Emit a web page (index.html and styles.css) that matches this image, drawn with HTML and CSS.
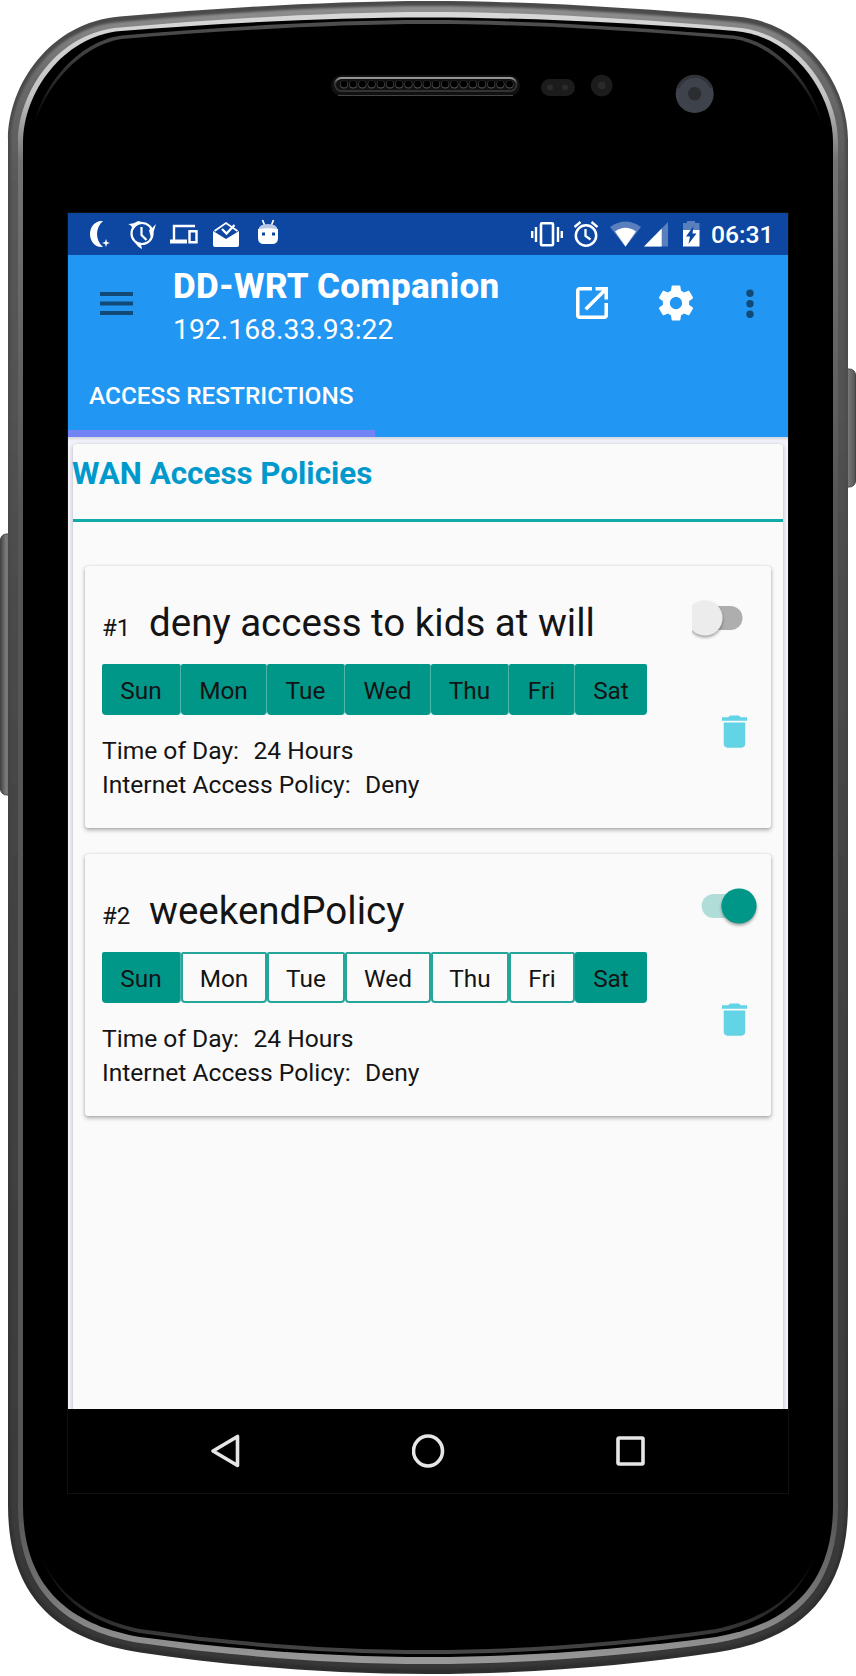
FILE: index.html
```html
<!DOCTYPE html>
<html lang="en">
<head>
<meta charset="utf-8">
<title>DD-WRT Companion</title>
<link rel="stylesheet" href="styles.css">
</head>
<body>
<div class="phone">
<svg class="shell" viewBox="0 0 856 1676" aria-hidden="true">
  <defs>
    <linearGradient id="rim" x1="0" y1="0" x2="0" y2="1"><stop offset="0" stop-color="#4a4a4a"/><stop offset=".25" stop-color="#4c4c4c"/><stop offset="1" stop-color="#2e2e2e"/></linearGradient>
    <linearGradient id="rim2" x1="0" y1="0" x2="0" y2="1"><stop offset="0" stop-color="#909090"/><stop offset=".04" stop-color="#6c6c6c"/><stop offset=".1" stop-color="#5a5a5a"/><stop offset=".5" stop-color="#444"/><stop offset="1" stop-color="#383838"/></linearGradient>
    <linearGradient id="shine" x1="0" y1="0" x2="0" y2="1"><stop offset="0" stop-color="#d8d8d8"/><stop offset=".05" stop-color="#c4c4c4"/><stop offset=".09" stop-color="#747474"/><stop offset=".3" stop-color="#565656"/><stop offset=".91" stop-color="#565656"/><stop offset=".95" stop-color="#707070"/><stop offset="1" stop-color="#999"/></linearGradient>
    <linearGradient id="sheen" x1="0" y1="0" x2="0" y2="1"><stop offset="0" stop-color="#505050"/><stop offset=".025" stop-color="#3c3c3c"/><stop offset=".065" stop-color="#000"/><stop offset=".94" stop-color="#000"/><stop offset=".975" stop-color="#2a2a2a"/><stop offset="1" stop-color="#484848"/></linearGradient>
    <linearGradient id="key" x1="0" y1="0" x2="1" y2="0"><stop offset="0" stop-color="#444"/><stop offset=".4" stop-color="#7c7c7c"/><stop offset="1" stop-color="#555"/></linearGradient>
    <linearGradient id="grille" x1="0" y1="0" x2="0" y2="1"><stop offset="0" stop-color="#999"/><stop offset=".4" stop-color="#333"/><stop offset="1" stop-color="#333"/></linearGradient>
    <filter id="soft" x="-5%" y="-5%" width="110%" height="110%"><feGaussianBlur stdDeviation="1.3"/></filter>
  </defs>
  <rect x=".5" y="534" width="14" height="261" rx="6" fill="url(#key)" stroke="#444"/>
  <rect x="841.500" y="369" width="14" height="118" rx="6" fill="url(#key)" stroke="#444"/>
  <path fill="url(#rim)" d="M8 140C8 85 50 22 120 16.5C220 8 330 1 428 1S636 8 736 16.5C806 22 848 85 848 140V1505C848 1600 796 1640 716 1652.5C626 1666 526 1674 428 1674S230 1666 140 1652.5C60 1640 8 1600 8 1505Z"/>
  <path filter="url(#soft)" fill="url(#rim2)" d="M11 140C11 88 53 27 120 22C220 13 330 6 428 6S636 13 736 22C803 27 845 88 845 140V1505C845 1598 792 1636 716 1648C626 1661 526 1669 428 1669S230 1661 140 1648C64 1636 11 1598 11 1505Z"/>
  <path fill="url(#shine)" d="M18 142C18 92 58 32 120 27.5C220 19 330 12 428 12S636 19 736 27.5C798 32 838 92 838 142V1505C838 1594 788 1631 716 1643C626 1656 526 1664 428 1664S230 1656 140 1643C68 1631 18 1594 18 1505Z"/>
  <path d="M23 142C23 94 62 36 121 31C221 23 330 17.500 428 17.500S635 23 735 31C794 36 833 94 833 142V1505C833 1589 785 1625 716 1637C626 1649 526 1657 428 1657S230 1649 140 1637C71 1625 23 1589 23 1505Z"/>
  <path fill="url(#sheen)" d="M31 142C33 98 72 42 122 35.500C222 27 330 20 428 20S634 27 734 35.500C784 42 823 98 825 142V1505C821 1586 775 1621 716 1633C626 1646 526 1654 428 1654S230 1646 140 1633C81 1621 35 1586 31 1505Z"/>
  <path d="M31 142C35 100 74 46 122 39C222 31 330 24 428 24S634 31 734 39C782 46 821 100 825 142V1505C821 1583 775 1617 716 1629C626 1642 526 1650 428 1650S230 1642 140 1629C81 1617 35 1583 31 1505Z"/>
  <rect x="331" y="75" width="189" height="21" rx="10.500" fill="#111"/>
  <path d="M338 95.500H513" stroke="#444"/>
  <rect x="335" y="78" width="181.500" height="13" rx="6.500" fill="#111" stroke="url(#grille)" stroke-width="2"/>
  <path d="M344 84.500H510" stroke="#565656" stroke-width="8" stroke-linecap="round" stroke-dasharray="0 9.200"/>
  <path d="M344 84H510" stroke="#000" stroke-width="7" stroke-linecap="round" stroke-dasharray="0 9.200"/>
  <rect x="541" y="79" width="34" height="17" rx="8.500" fill="#1c1c1c"/>
  <g fill="#2b2b2b"><circle cx="550" cy="87.500" r="3"/><circle cx="565" cy="87.500" r="3"/></g>
  <circle cx="601.700" cy="85.500" r="10.800" fill="#1c1c1c"/><circle cx="601.700" cy="85.500" r="3.800" fill="#2b2b2b"/>
  <circle cx="694.700" cy="94" r="19" fill="#3e434b"/><path d="M678 88A17.800 17.800 0 0 1 711.500 88" fill="none" stroke="#30343a" stroke-width="3"/><circle cx="694.700" cy="93.700" r="6.700" fill="#2b2d31"/>
</svg>

<main class="screen">
  <div class="status">
    <svg class="si moon" viewBox="0 0 32 42"><path fill="#fff" d="M17 8C9 7 4 14 4 21S9 35 17 34C9 27 9 15 17 8ZM20 26l1 3 3 1-3 1-1 3-1-3-3-1 3-1Z"/></svg>
    <svg class="si timely" viewBox="0 0 32 42"><circle cx="16" cy="20.500" r="10.500" fill="none" stroke="#fff" stroke-width="2.200"/><path fill="#fff" d="M2 11Q8 11 12 8L16 9Q9 13 7 17 6 12 2 11ZM30 11Q27 21 25 25L23 17Q27 15 30 11ZM7 26Q11 34 16 36L15 31Q10 31 7 26Z"/><path d="M15.500 14v8l5 5" fill="none" stroke="#fff" stroke-width="2.200"/></svg>
    <svg class="si devices" viewBox="0 0 32 42"><path d="M6 27V13H27" fill="none" stroke="#fff" stroke-width="2.400"/><path fill="#fff" d="M2 26.500H19V30.500H2Z"/><path d="M21.500 18.200H28.500V29.200H21.500Z" fill="none" stroke="#fff" stroke-width="2.400"/></svg>
    <svg class="si inbox" viewBox="0 0 32 42"><path d="M4.500 18 16 10 27.500 18" fill="none" stroke="#fff" stroke-width="1.800"/><path fill="#fff" d="M3 18L16 26 29 18V32Q29 34 27 34H5Q3 34 3 32Z"/><path d="m12 16 4.500 4.500L24.500 12" fill="none" stroke="#fff" stroke-width="2.300"/></svg>
    <svg class="si droid" viewBox="0 0 32 42"><path d="m10.500 7 2 5M21.500 7l-2 5" stroke="#fff" stroke-width="1.700"/><path d="M6.500 17Q6.500 11 16 11T25.500 17Z" fill="#b8c8e6"/><path fill="#fff" d="M6 16Q16 14.500 26 16V25Q26 31 20 31H12Q6 31 6 25Z"/><path d="M10 19.500h3v3h-3zM20 19.500h3v3h-3z" fill="#0d47a1"/></svg>
    <svg class="si vibrate" viewBox="0 0 34 42"><rect x="11" y="10.200" width="12" height="22" rx="1" fill="none" stroke="#fff" stroke-width="2.600"/><path d="M2.200 18v7M6 14v15M28 14v15M31.800 18v7" stroke="#fff" stroke-width="2.400"/></svg>
    <svg class="si alarm" viewBox="0 0 28 42"><circle cx="14" cy="22.500" r="10.200" fill="none" stroke="#fff" stroke-width="2.500"/><path d="m2.500 14 6-5M25.500 14l-6-5M13.500 16v7l5 3.500" fill="none" stroke="#fff" stroke-width="2.300"/></svg>
    <svg class="si wifi" viewBox="0 0 33 42"><path fill="#5a7fbd" d="M1 14Q16.500 3 32 14L16.500 34Z"/><path fill="#fff" d="M6 18.500Q16.500 11 27 18.500L16.500 33.500Z"/></svg>
    <svg class="si signal" viewBox="0 0 26 42"><path fill="#5a7fbd" d="M1 33.500 25 9V33.500Z"/><path fill="#fff" d="M1 33.500 18.700 15.500V33.500Z"/></svg>
    <svg class="si battery" viewBox="0 0 19 42"><path fill="#5a7fbd" d="M1 10H5V8H13V10H17.500V19H1Z"/><path fill="#fff" d="M1 17H17.500V33.500H1Z"/><path fill="#0d47a1" d="M11.500 13 4 23.500H8L6.500 31 14.500 20.500H10.500Z"/></svg>
    <span class="time">06:31</span>
  </div>

  <header class="appbar">
    <div class="toolbar">
      <svg class="menu" viewBox="0 0 34 24"><path d="M0 2H33M0 11.500H33M0 21H33" stroke="#124a77" stroke-width="3.800"/></svg>
      <div class="titles"><div class="title">DD-WRT Companion</div><div class="subtitle">192.168.33.93:22</div></div>
      <svg class="open" viewBox="3 3 18 18"><path fill="#fff" d="M19 19H5V5h7V3H5c-1.110 0-2 .9-2 2v14c0 1.100.89 2 2 2h14c1.100 0 2-.9 2-2v-7h-2v7zM14 3v2h3.590l-9.830 9.830 1.410 1.410L19 6.410V10h2V3h-7z"/></svg>
      <svg class="gear" viewBox="0 0 24 24"><path fill="#fff" d="M19.430 12.980c.04-.32.07-.64.07-.98s-.03-.66-.07-.98l2.110-1.650c.19-.15.24-.42.12-.64l-2-3.460c-.12-.22-.39-.3-.61-.22l-2.490 1c-.52-.4-1.080-.73-1.690-.98l-.38-2.650C14.460 2.180 14.250 2 14 2h-4c-.25 0-.46.18-.49.42l-.38 2.650c-.61.25-1.170.59-1.690.98l-2.490-1c-.23-.09-.49 0-.61.22l-2 3.460c-.13.22-.07.49.12.64l2.110 1.650c-.04.32-.07.65-.07.98s.03.66.07.98l-2.110 1.650c-.19.15-.24.42-.12.64l2 3.460c.12.22.39.3.61.22l2.490-1c.52.4 1.080.73 1.690.98l.38 2.650c.03.24.24.42.49.42h4c.25 0 .46-.18.49-.42l.38-2.650c.61-.25 1.170-.59 1.690-.98l2.490 1c.23.09.49 0 .61-.22l2-3.460c.12-.22.07-.49-.12-.64l-2.110-1.650zM12 15.500c-1.930 0-3.500-1.570-3.500-3.500s1.570-3.500 3.500-3.500 3.500 1.570 3.500 3.500-1.570 3.500-3.500 3.500z"/></svg>
      <svg class="more" viewBox="0 0 8 30"><g fill="#124a77"><circle cx="4" cy="4.300" r="3.700"/><circle cx="4" cy="14.800" r="3.700"/><circle cx="4" cy="25.300" r="3.700"/></g></svg>
    </div>
    <nav class="tabs"><div class="tab">ACCESS RESTRICTIONS</div></nav>
  </header>

  <div class="content">
    <section class="panel">
      <h1 class="heading">WAN Access Policies</h1>
      <div class="cards">
        <article class="card">
          <div class="info">
            <div class="name"><span class="num">#1</span><span class="label">deny access to kids at will</span></div>
            <div class="days"><span class="day sun on">Sun</span><span class="day mon on">Mon</span><span class="day tue on">Tue</span><span class="day wed on">Wed</span><span class="day thu on">Thu</span><span class="day fri on">Fri</span><span class="day sat on">Sat</span></div>
            <div class="row"><span>Time of Day:</span><span>24 Hours</span></div>
            <div class="row"><span>Internet Access Policy:</span><span>Deny</span></div>
          </div>
          <div class="actions">
            <svg class="switch" viewBox="0 0 79 44"><rect x="0" y="10" width="50.500" height="24" rx="12" fill="#aeaeae"/><circle class="thumb" cx="13" cy="22" r="17.600" fill="#ececec"/></svg>
            <svg class="trash" viewBox="0 0 24 24"><path fill="#63d4e5" d="M6 19c0 1.100.9 2 2 2h8c1.100 0 2-.9 2-2V7H6v12zM19 4h-3.500l-1-1h-5l-1 1H5v2h14V4z"/></svg>
          </div>
        </article>
        <article class="card">
          <div class="info">
            <div class="name"><span class="num">#2</span><span class="label second">weekendPolicy</span></div>
            <div class="days"><span class="day sun on">Sun</span><span class="day mon">Mon</span><span class="day tue">Tue</span><span class="day wed">Wed</span><span class="day thu">Thu</span><span class="day fri">Fri</span><span class="day sat on">Sat</span></div>
            <div class="row"><span>Time of Day:</span><span>24 Hours</span></div>
            <div class="row"><span>Internet Access Policy:</span><span>Deny</span></div>
          </div>
          <div class="actions">
            <svg class="switch" viewBox="0 0 79 44"><rect x="9.700" y="10" width="50" height="24" rx="12" fill="#b0ddd8"/><circle class="thumb" cx="47" cy="22" r="17.600" fill="#009688"/></svg>
            <svg class="trash" viewBox="0 0 24 24"><path fill="#63d4e5" d="M6 19c0 1.100.9 2 2 2h8c1.100 0 2-.9 2-2V7H6v12zM19 4h-3.500l-1-1h-5l-1 1H5v2h14V4z"/></svg>
          </div>
        </article>
      </div>
    </section>
  </div>

  <footer class="navbar">
    <svg viewBox="0 0 34 34"><path d="M27.500 2.500V31.500L3 17Z"/></svg>
    <svg viewBox="0 0 34 34"><ellipse cx="16" cy="17" rx="14.500" ry="15"/></svg>
    <svg viewBox="0 0 34 34"><rect x="5" y="4" width="25" height="26" rx="1"/></svg>
  </footer>
</main>
</div>
</body>
</html>
```
FILE: styles.css
```css
* { box-sizing: border-box; }
body { margin: 0; background: #fff; font-family: Roboto, sans-serif; color: #141414; }
.phone { position: relative; width: 856px; height: 1676px; padding: 213px 68px 0; overflow: hidden; }
.shell { position: absolute; left: 0; top: 0; width: 856px; height: 1676px; }
.screen { position: relative; width: 720px; height: 1280px; display: flex; flex-direction: column; box-shadow: 0 0 0 1px #101010; }

.status { display: flex; height: 42px; padding-left: 18px; background: #0d47a1; color: #fff; }
.si { width: 32px; height: 42px; flex: none; }
.timely { margin-left: 8px; }
.devices, .inbox { margin-left: 10px; }
.droid { margin-left: 10px; }
.vibrate { width: 34px; margin-left: 246px; }
.alarm { width: 28px; margin-left: 8px; }
.wifi { width: 33px; margin-left: 9px; }
.signal { width: 26px; margin-left: 1px; }
.battery { width: 19px; margin-left: 13px; }
.time { margin-left: 10px; font-size: 24.700px; font-weight: 500; line-height: 44px; }

.appbar { height: 182px; background: #2196f3; color: #fff; }
.toolbar { display: flex; height: 98px; }
.menu { width: 34px; height: 24px; margin: 37px 0 0 32px; }
.titles { width: 333px; margin-left: 39px; padding-top: 11px; white-space: nowrap; }
.title { font-size: 35px; font-weight: 800; line-height: 42px; letter-spacing: .3px; }
.subtitle { margin-top: 1px; font-size: 28.350px; line-height: 42px; }
.open { width: 32px; height: 32px; margin: 32px 0 0 69.500px; }
.gear { width: 42px; height: 42px; margin: 27px 0 0 47.500px; }
.more { width: 8px; height: 30px; margin: 34px 0 0 49px; }
.tab { width: 307px; height: 84px; padding-left: 21px; border-bottom: 7px solid #7283f5; font-size: 24.400px; font-weight: 500; line-height: 86px; white-space: nowrap; }

.content { flex: 1; min-height: 0; padding: 7px 5px 0; overflow: hidden; background: linear-gradient(#d4d4de, #f3f3fb 4px); }
.panel { height: 972px; background: #fafafa; border-radius: 3px 3px 0 0; box-shadow: 0 1px 4px rgba(0, 0, 0, .28); }
.heading { height: 78px; margin: 0; border-bottom: 3px solid #10aaa8; color: #0099cc; font-size: 31.350px; font-weight: 700; line-height: 60px; text-indent: -1px; }
.cards { display: grid; gap: 26px; padding: 44px 12px 0; }
.card { display: grid; grid-template-columns: 607px 79px; height: 262px; background: #fafafa; border-radius: 3px; box-shadow: 0 2px 4px rgba(0, 0, 0, .32), 0 0 2px rgba(0, 0, 0, .12); }
.info { padding: 31px 0 0 17px; font-size: 24.600px; white-space: nowrap; }
.name { display: flex; align-items: baseline; height: 50px; line-height: 52px; }
.num { width: 47px; font-size: 24px; }
.label { font-size: 38.500px; }
.days { display: flex; margin: 17px 0 19px; font-size: 24.400px; }
.day { height: 51px; border: 2px solid #26a69a; border-radius: 2px 2px 4px 4px; line-height: 50px; text-align: center; }
.on { border: 0; border-right: 1px solid #4db6ac; background: #009688; line-height: 54px; }
.sat.on { border-right: 0; }
.sun { width: 79px; }
.mon { width: 86px; }
.tue { width: 78px; }
.wed { width: 86px; }
.thu { width: 78px; }
.fri { width: 66px; }
.sat { width: 72px; }
.row { display: flex; gap: 14.500px; line-height: 34px; }
.actions { padding-top: 30px; }
.switch { display: block; width: 79px; height: 44px; }
.thumb { filter: drop-shadow(0 2px 1.500px rgba(0, 0, 0, .35)); }
.trash { display: block; width: 43px; height: 43px; margin: 69.500px 0 0 21px; }

.navbar { display: flex; justify-content: space-between; height: 84px; padding: 25px 141px 0 142px; background: #000; }
.navbar svg { width: 34px; height: 34px; fill: none; stroke: #e6e6e6; stroke-width: 3.600; stroke-linejoin: round; }
```
